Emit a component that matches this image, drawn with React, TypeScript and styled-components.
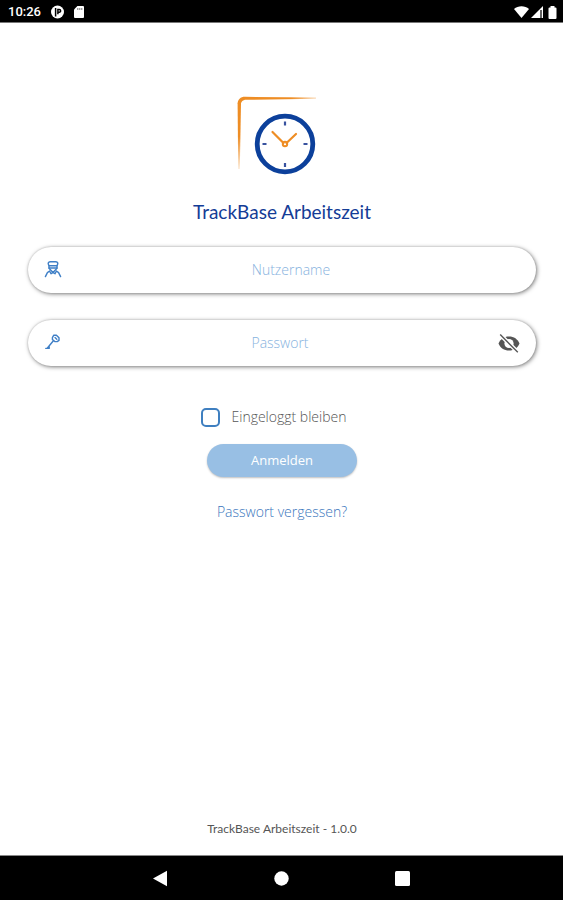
import React, { useState } from "react";
import styled, { createGlobalStyle } from "styled-components";

const GlobalStyle = createGlobalStyle`
  *, *::before, *::after { box-sizing: border-box; }
  body {
    margin: 0;
    background: #fff;
    font-family: "Open Sans", "Noto Sans", sans-serif;
  }
`;

const Screen = styled.div`
  display: flex;
  flex-direction: column;
  min-height: 100vh;
`;

const StatusBar = styled.header`
  display: flex;
  align-items: center;
  justify-content: space-between;
  height: 23px;
  padding: 2px 6px 0 8px;
  background: #000;
  border-bottom: 1px solid #777;
  color: #fff;
  font: 500 13px/20px Roboto, sans-serif;
`;

const StatusGroup = styled.div<{ $gap: number }>`
  display: flex;
  align-items: center;
  gap: ${(p) => p.$gap}px;
`;

const Main = styled.main`
  display: flex;
  flex: 1;
  flex-direction: column;
  align-items: center;
  padding: 72px 27px 16px 28px;
`;

const LogoMark = styled.svg`
  display: block;
  margin-right: 10px;
`;

const Title = styled.h1`
  margin: 24px 0 22px;
  color: #143c96;
  font: 400 19px/26px Lato, sans-serif;
`;

const Form = styled.form`
  display: flex;
  flex-direction: column;
  align-items: center;
  width: 100%;
`;

const Field = styled.div`
  display: flex;
  align-items: center;
  width: 100%;
  height: 46px;
  margin-bottom: 27px;
  padding: 0 16px;
  border-radius: 23px;
  background: #fff;
  box-shadow: 1px 1px 4px rgba(0, 0, 0, 0.5), 0 0 2px rgba(0, 0, 0, 0.15);
`;

const FieldLabel = styled.label`
  display: flex;
  flex: none;
  width: 18px;
  color: #3f7fc6;
`;

const TextInput = styled.input`
  flex: 1;
  min-width: 0;
  padding: 0;
  border: 0;
  outline: 0;
  background: transparent;
  color: #2f6fb8;
  font: 300 14px/20px "Open Sans", "Noto Sans", sans-serif;
  text-align: center;
  &::placeholder { color: #86b2de; opacity: 1; }
`;

const EyeButton = styled.button`
  display: flex;
  flex: none;
  padding: 0;
  border: 0;
  background: transparent;
  color: #555;
  cursor: pointer;
`;

const Remember = styled.label`
  display: flex;
  align-items: center;
  gap: 11px;
  margin: 12px 16px 0 0;
  color: #555;
  font-size: 14px;
  font-weight: 300;
  line-height: 24px;
`;

const Checkbox = styled.input`
  appearance: none;
  width: 19px;
  height: 19px;
  margin: 0;
  border: 2px solid #3f7fc0;
  border-radius: 5px;
  background: #fff;
  &:checked { background: #3f7fc0; }
`;

const SubmitButton = styled.button`
  width: 150px;
  height: 33px;
  margin-top: 15px;
  padding: 0 0 2px;
  border: 0;
  border-radius: 17px;
  background: #98bfe4;
  box-shadow: 0 1px 2px rgba(0, 0, 0, 0.25);
  color: #fff;
  font: 400 13px/20px "Open Sans", "Noto Sans", sans-serif;
  cursor: pointer;
`;

const ForgotLink = styled.a`
  margin-top: 25px;
  color: #3a76bd;
  font-size: 14px;
  font-weight: 300;
  line-height: 20px;
  text-decoration: none;
`;

const Version = styled.footer`
  margin-top: auto;
  color: #555;
  font: 400 12px/20px Lato, sans-serif;
`;

const NavBar = styled.nav`
  display: flex;
  align-items: center;
  justify-content: center;
  gap: 104px;
  height: 45px;
  border-top: 1px solid #888;
  background: #000;
`;

const NavButton = styled.button`
  display: flex;
  padding: 0;
  border: 0;
  background: transparent;
  color: #fff;
`;

const Logo = () => (
  <LogoMark width="80" height="80" viewBox="0 0 80 80" fill="none" aria-hidden="true">
    <defs>
      <linearGradient id="fadeRight" gradientUnits="userSpaceOnUse" x1="8" y1="0" x2="79" y2="0">
        <stop stopColor="#ee8d24" />
        <stop offset="0.65" stopColor="#ee8d24" />
        <stop offset="1" stopColor="#ee8d24" stopOpacity="0.3" />
      </linearGradient>
      <linearGradient id="fadeDown" gradientUnits="userSpaceOnUse" x1="0" y1="8" x2="0" y2="75">
        <stop stopColor="#ee8d24" />
        <stop offset="0.5" stopColor="#ee8d24" />
        <stop offset="1" stopColor="#ee8d24" stopOpacity="0.15" />
      </linearGradient>
    </defs>
    <path d="M8 1.8L79 2.6V3.8L9 4.8C6 4.8 4 7 4 9H.6C.6 4.5 3.5 1.8 8 1.8Z" fill="url(#fadeRight)" />
    <path d="M.6 8.5H4L2.8 74H1.2Z" fill="url(#fadeDown)" />
    <circle cx="48" cy="49" r="27.8" stroke="#0c409b" strokeWidth="4.8" />
    <path d="M48 26.5v4M48 68v4M25.5 49h4M66.5 49h4" stroke="#38529f" strokeWidth="2.2" />
    <path d="M35.5 37L46.5 48M49.5 48L59 39" stroke="#ee8d24" strokeWidth="2.2" strokeLinecap="round" />
    <circle cx="48" cy="49" r="2.2" stroke="#ee8d24" strokeWidth="2" />
  </LogoMark>
);

const UserIcon = () => (
  <svg width="18" height="18" viewBox="0 0 18 18" fill="none" stroke="currentColor" strokeWidth="1.4" strokeLinejoin="round" strokeLinecap="round" aria-hidden="true">
    <path d="M4.2 2.8Q4.2 .8 6.4 .8H11.6Q13.8 .8 13.8 2.8L13 4.8H5Z" />
    <path d="M5 4.8V7.2L9 11.4L13 7.2V4.8" />
    <path d="M5 7H13" />
    <path d="M1.4 15.6L3.4 11.6L5.6 10L7 12.8L9 11.4L11 12.8L12.4 10L14.6 11.6L16.6 15.6" />
  </svg>
);

const KeyIcon = () => (
  <svg width="18" height="18" viewBox="0 0 18 18" fill="none" stroke="currentColor" strokeWidth="1.4" strokeLinejoin="round" strokeLinecap="round" aria-hidden="true">
    <path d="M8.4 3.6L9.8 1.2H12.4L15 3.8V6.4L13.2 7.6H10.8L8.4 5.4Z" />
    <path d="M9.4 6.8L3.2 14.2M1.8 14.4H5.2V12.4M11 3.6L12.8 5.2" />
  </svg>
);

const EyeOffIcon = () => (
  <svg width="22" height="20" viewBox="0 0 22 20" fill="none" aria-hidden="true">
    <path d="M.5 10.5C2.3 6 6.1 3.4 11 3.4S19.7 6 21.5 10.5C19.7 15 15.9 17.6 11 17.6S2.3 15 .5 10.5Z" fill="currentColor" />
    <circle cx="11" cy="10.5" r="4.6" fill="#fff" />
    <path d="M2.6 2L19.6 19" stroke="#fff" strokeWidth="4" />
    <path d="M2.2 1.6L19.8 19.2" stroke="currentColor" strokeWidth="1.4" />
  </svg>
);

export default function App() {
  const [visible, setVisible] = useState(false);
  return (
    <Screen>
      <GlobalStyle />
      <StatusBar>
        <StatusGroup $gap={10}>
          <span>10:26</span>
          <svg width="13" height="14" viewBox="0 0 13 14" aria-hidden="true">
            <circle cx="6.5" cy="7" r="6.5" fill="#fff" />
            <path d="M4.6 3V11.4M6.9 9.2V4.4H8.3Q9.6 4.4 9.6 5.8T8.3 7.2H7" fill="none" stroke="#000" strokeWidth="1.5" />
          </svg>
          <svg width="10" height="12" viewBox="0 0 10 12" aria-hidden="true">
            <path d="M3.4 0H9Q10 0 10 1V11Q10 12 9 12H1Q0 12 0 11V3.4Z" fill="#fff" />
            <path d="M3.8 2V4M5.8 2V4M7.8 2V4" stroke="#777" strokeWidth="1" />
          </svg>
        </StatusGroup>
        <StatusGroup $gap={2}>
          <svg width="15" height="12" viewBox="0 0 15 12" aria-hidden="true">
            <path d="M0 3C4 -.6 11 -.6 15 3L7.5 12Z" fill="#fff" />
          </svg>
          <svg width="13" height="12" viewBox="0 0 13 12" aria-hidden="true">
            <path d="M0 12L12 0V12Z" fill="#fff" />
            <path d="M10 4V12" stroke="#222" strokeWidth="1.4" />
          </svg>
          <svg width="11" height="13" viewBox="0 0 11 13" aria-hidden="true">
            <path d="M4.5 0H8.5V1.4H9.5Q10.5 1.4 10.5 2.4V12Q10.5 13 9.5 13H3.5Q2.5 13 2.5 12V2.4Q2.5 1.4 3.5 1.4H4.5Z" fill="#fff" />
          </svg>
        </StatusGroup>
      </StatusBar>
      <Main>
        <Logo />
        <Title>TrackBase Arbeitszeit</Title>
        <Form onSubmit={(e) => e.preventDefault()}>
          <Field>
            <FieldLabel htmlFor="user" aria-label="Nutzername"><UserIcon /></FieldLabel>
            <TextInput id="user" type="text" placeholder="Nutzername" />
          </Field>
          <Field>
            <FieldLabel htmlFor="password" aria-label="Passwort"><KeyIcon /></FieldLabel>
            <TextInput id="password" type={visible ? "text" : "password"} placeholder="Passwort" />
            <EyeButton type="button" aria-label="Passwort anzeigen" onClick={() => setVisible(!visible)}>
              <EyeOffIcon />
            </EyeButton>
          </Field>
          <Remember>
            <Checkbox type="checkbox" />
            Eingeloggt bleiben
          </Remember>
          <SubmitButton type="submit">Anmelden</SubmitButton>
          <ForgotLink href="#reset">Passwort vergessen?</ForgotLink>
        </Form>
        <Version>TrackBase Arbeitszeit - 1.0.0</Version>
      </Main>
      <NavBar>
        <NavButton type="button" aria-label="Zurück">
          <svg width="17" height="17" viewBox="0 0 17 17"><path d="M1 8.5L15 .8V16.2Z" fill="currentColor" /></svg>
        </NavButton>
        <NavButton type="button" aria-label="Startseite">
          <svg width="17" height="17" viewBox="0 0 17 17"><circle cx="8.5" cy="8.5" r="7.2" fill="currentColor" /></svg>
        </NavButton>
        <NavButton type="button" aria-label="Übersicht">
          <svg width="17" height="17" viewBox="0 0 17 17"><rect x="1" y="1" width="15" height="15" rx="1.5" fill="currentColor" /></svg>
        </NavButton>
      </NavBar>
    </Screen>
  );
}
